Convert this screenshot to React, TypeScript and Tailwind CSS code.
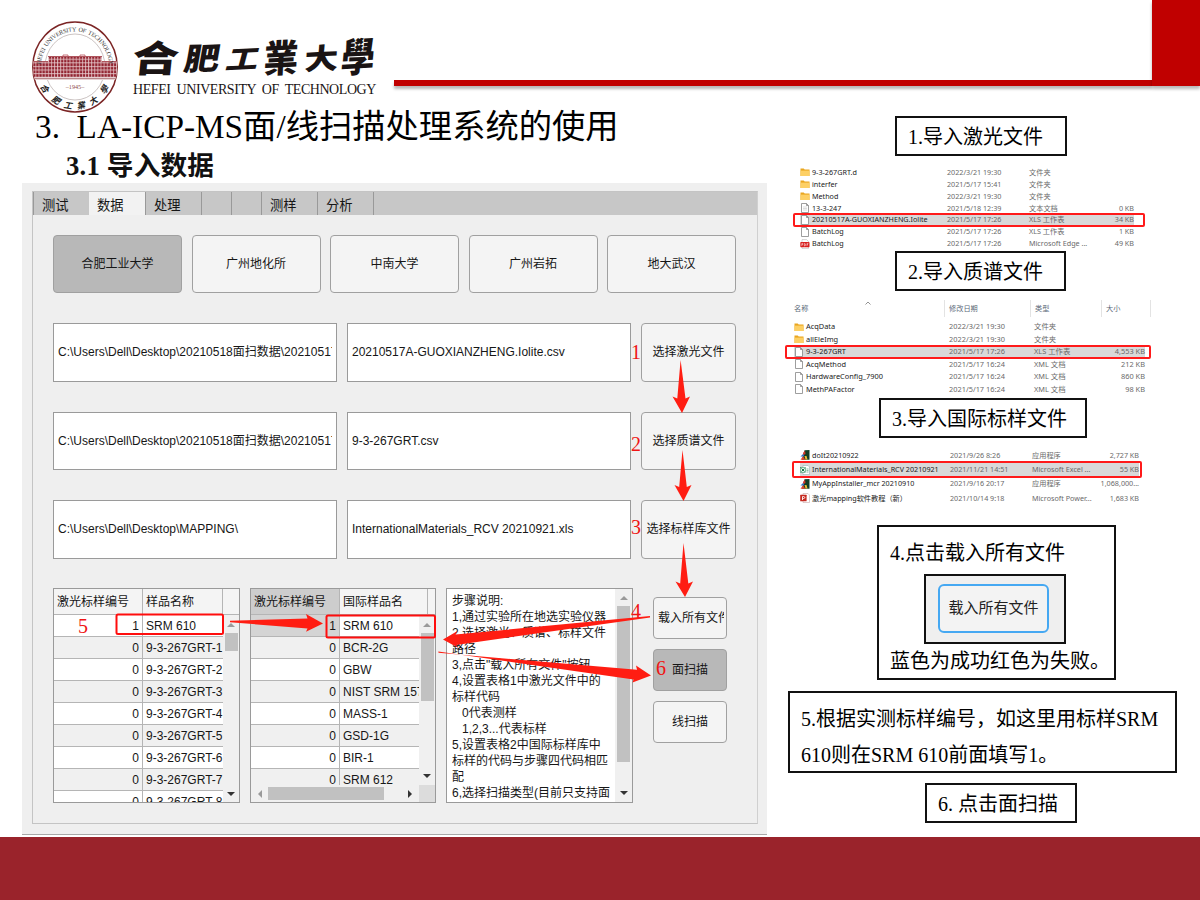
import React from 'react';

const latin = "font-['Liberation_Serif','Noto_Sans_CJK_SC',serif]";
const ui = "font-['Liberation_Sans','Noto_Sans_CJK_SC',sans-serif]";

function Seal() {
  return (
    <svg viewBox="0 0 90 94" className="w-[90px] h-[94px]">
      <defs>
        <path id="sealTop" d="M 10.6 48 A 34.4 36.5 0 0 1 79.4 48" />
        <clipPath id="sealClip"><ellipse cx="45" cy="47" rx="42" ry="45" /></clipPath>
        <pattern id="win" width="3.1" height="3.6" patternUnits="userSpaceOnUse">
          <rect width="3.1" height="3.6" fill="#b4616a" />
          <rect x="0.4" y="0.4" width="2" height="2.3" fill="#912330" />
          <rect x="2.5" y="0" width="0.5" height="3.6" fill="#ecd8d9" />
          <rect x="0" y="2.9" width="3.1" height="0.5" fill="#f0dfe0" />
        </pattern>
      </defs>
      <ellipse cx="45" cy="47" rx="42.2" ry="45" fill="#fff" stroke="#7b2424" strokeWidth="1.5" />
      <ellipse cx="45" cy="47" rx="30" ry="33" fill="none" stroke="#a79a98" strokeWidth="0.6" />
      <g clipPath="url(#sealClip)">
        <rect x="2" y="41" width="86" height="19" fill="#f6eaea" />
        <rect x="2" y="42" width="18" height="15" fill="url(#win)" />
        <rect x="70" y="42" width="18" height="15" fill="url(#win)" />
        <rect x="18.5" y="37" width="53" height="20" fill="url(#win)" />
        <path d="M18 36.5H72M2 41.5H18M72 41.5H88" stroke="#a7434c" strokeWidth="0.9" />
        <path d="M2 58.5H88" stroke="#b9878a" strokeWidth="1.6" />
        <path d="M33 36v-1h5v1M50 36v-1h5v1" stroke="#b9505a" strokeWidth="0.8" fill="none" />
      </g>
      <text fontSize="6.2" wordSpacing="1" fill="#333" className="font-['Liberation_Serif',serif]">
        <textPath href="#sealTop" startOffset="3.5" textLength="105">HEFEI UNIVERSITY OF TECHNOLOGY</textPath>
      </text>
      <text x="45" y="69" textAnchor="middle" fontSize="6.2" fill="#8c4a4a" className="font-['Liberation_Serif',serif]">–1945–</text>
      <g fontSize="8.5" fontWeight="700" fill="#222" textAnchor="middle" className="font-['Noto_Sans_CJK_TC',sans-serif]">
        <text transform="translate(14.5 69) rotate(56) skewX(-12)" y="2.5">合</text>
        <text transform="translate(26 81) rotate(32) skewX(-12)" y="2.5">肥</text>
        <text transform="translate(38.5 86) rotate(10) skewX(-12)" y="2.5">工</text>
        <text transform="translate(51.5 86) rotate(-10) skewX(-12)" y="2.5">業</text>
        <text transform="translate(64 81) rotate(-32) skewX(-12)" y="2.5">大</text>
        <text transform="translate(75 69.5) rotate(-56) skewX(-12)" y="2.5">學</text>
      </g>
    </svg>
  );
}

function Wordmark() {
  return (
    <svg viewBox="0 0 250 44" className="w-[250px] h-[44px] overflow-visible">
      <g fontWeight="900" fill="#1a1414" className="font-['Noto_Sans_CJK_TC',sans-serif]">
        <text transform="translate(-1 35.500) skewX(-6) scale(1.26 1)" fontSize="37">合</text>
        <text transform="translate(50.500 34.500) rotate(-2) skewX(-12) scale(1.08 0.92)" fontSize="33">肥</text>
        <text transform="translate(92.500 33.500) rotate(-3) skewX(-18) scale(1.08 0.87)" fontSize="30">工</text>
        <text transform="translate(131 37) rotate(-3) skewX(-6) scale(1.05 1.14)" fontSize="33">業</text>
        <text transform="translate(172 34) rotate(-3) skewX(-6) scale(1.02 0.87)" fontSize="33">大</text>
        <text transform="translate(208 36.500) rotate(-3) skewX(-8) scale(1.02 1.2)" fontSize="33">學</text>
      </g>
    </svg>
  );
}

const tabs: [string, string][] = [
  ['测试', 'w-[56px] bg-[#c7c7c7] border-l border-[#999]'],
  ['数据', 'w-[56px] bg-[#f2f2f2]'],
  ['处理', 'w-[56px] bg-[#c7c7c7] border-l border-[#999]'],
  ['', 'w-[30px] bg-[#c7c7c7] border-l border-[#999]'],
  ['', 'w-[30px] bg-[#c7c7c7] border-l border-[#999]'],
  ['测样', 'w-[56px] bg-[#c7c7c7] border-l border-[#999]'],
  ['分析', 'w-[56px] bg-[#c7c7c7] border-l border-[#999]'],
];

function Btn({ children, className = '' }: { children: React.ReactNode; className?: string }) {
  return (
    <div className={`flex items-center justify-center overflow-hidden whitespace-nowrap rounded-[4px] border border-[#a0a0a0] text-[12px] text-[#161616] ${className}`}>
      {children}
    </div>
  );
}

function FileRow({ path, file, button }: { path: string; file: string; button: string }) {
  return (
    <div className="flex h-[58.500px]">
      <div className="mr-[10px] flex w-[284px] items-center border border-[#9a9a9a] bg-white pl-[4px] pr-[4px]">
        <span className="w-full overflow-hidden whitespace-nowrap">{path}</span>
      </div>
      <div className="mr-[10px] flex w-[284px] items-center whitespace-nowrap border border-[#9a9a9a] bg-white pl-[4px]">{file}</div>
      <Btn className="w-[95px] bg-[#f4f4f4]">{button}</Btn>
    </div>
  );
}

function Tri({ dir, dim }: { dir: 'up' | 'down' | 'left' | 'right'; dim?: boolean }) {
  const d = { up: 'M0 5L4 1L8 5Z', down: 'M0 2L4 6L8 2Z', left: 'M6 0L2 4L6 8Z', right: 'M2 0L6 4L2 8Z' }[dir];
  return <svg viewBox="0 0 8 8" className="h-[8px] w-[8px]"><path d={d} fill={dim ? '#9a9a9a' : '#333'} /></svg>;
}

const samples = ['SRM 610', '9-3-267GRT-1', '9-3-267GRT-2', '9-3-267GRT-3', '9-3-267GRT-4', '9-3-267GRT-5', '9-3-267GRT-6', '9-3-267GRT-7', '9-3-267GRT-8'];
const standards = ['SRM 610', 'BCR-2G', 'GBW', 'NIST SRM 157', 'MASS-1', 'GSD-1G', 'BIR-1', 'SRM 612'];

function Rows({ names, selected }: { names: string[]; selected?: boolean }) {
  return (
    <>
      {names.map((n, i) => (
        <div key={n} className={`flex h-[22px] shrink-0 border-b border-[#b5b5b5] ${i % 2 ? 'bg-[#f0f0f0]' : 'bg-white'}`}>
          <div className={`flex w-[89px] items-center justify-end border-r border-[#b5b5b5] pr-[3px] ${selected && i === 0 ? 'bg-[#d4d4d4]' : ''}`}>{i === 0 ? 1 : 0}</div>
          <div className="flex flex-1 items-center overflow-hidden whitespace-nowrap pl-[3px]">{n}</div>
        </div>
      ))}
    </>
  );
}

const steps = ['步骤说明:', '1,通过实验所在地选实验仪器', '2,选择激光、质谱、标样文件', '路径', '3,点击"载入所有文件"按钮', '4,设置表格1中激光文件中的', '标样代码', '   0代表测样', '   1,2,3...代表标样', '5,设置表格2中国际标样库中', '标样的代码与步骤四代码相匹', '配', '6,选择扫描类型(目前只支持面'];

function Panel() {
  return (
    <section className={`relative ml-[22px] flex h-[652px] w-[745px] flex-col border-b border-[#a8a8a8] bg-[#efefef] pl-[10px] pr-[9px] pt-[8px] text-[12px] text-[#161616] ${ui}`}>
      <div className="flex h-[633px] flex-col border border-[#c4c4c4] border-r-[#d0d0d0]">
        <div className="flex h-[23px] shrink-0 bg-[#c7c7c7] text-[13.3px]">
          {tabs.map(([t, c], i) => (
            <div key={i} className={`flex items-center pl-[8px] pt-[4px] ${c}`}>{t}</div>
          ))}
          <div className="border-l border-[#999]" />
        </div>
        <div className="flex flex-col pl-[20px] pt-[20px]">
          <div className="flex h-[58px] gap-[9.500px]">
            <Btn className="w-[129px] border-[#8f8f8f] bg-[#b8b8b8]">合肥工业大学</Btn>
            <Btn className="w-[129px] bg-[#f4f4f4]">广州地化所</Btn>
            <Btn className="w-[129px] bg-[#f4f4f4]">中南大学</Btn>
            <Btn className="w-[129px] bg-[#f4f4f4]">广州岩拓</Btn>
            <Btn className="w-[129px] bg-[#f4f4f4]">地大武汉</Btn>
          </div>
          <div className="mt-[30px] flex flex-col gap-[30px]">
            <FileRow path="C:\Users\Dell\Desktop\20210518面扫数据\20210517" file="20210517A-GUOXIANZHENG.Iolite.csv" button="选择激光文件" />
            <FileRow path="C:\Users\Dell\Desktop\20210518面扫数据\20210517" file="9-3-267GRT.csv" button="选择质谱文件" />
            <FileRow path="C:\Users\Dell\Desktop\MAPPING\" file="InternationalMaterials_RCV 20210921.xls" button="选择标样库文件" />
          </div>
          <div className="mt-[29.500px] flex h-[215px] items-start">
            <div className="flex h-[215px] w-[187px] flex-col overflow-hidden border border-[#9a9a9a] bg-[#f0f0f0]">
              <div className="flex h-[26px] shrink-0 border-b border-[#b5b5b5] bg-[#f4f4f4]">
                <div className="flex w-[89px] items-center border-r border-[#b5b5b5] pl-[3px]">激光标样编号</div>
                <div className="flex w-[80px] items-center border-r border-[#b5b5b5] pl-[3px]">样品名称</div>
              </div>
              <div className="flex min-h-0 flex-1">
                <div className="flex w-[169px] flex-col overflow-hidden"><Rows names={samples} /></div>
                <div className="flex flex-1 flex-col items-center pb-[4px] pt-[7px]">
                  <Tri dir="up" dim />
                  <div className="mt-[3px] h-[18px] w-[13px] bg-[#c1c1c1]" />
                  <div className="flex-1" />
                  <Tri dir="down" />
                </div>
              </div>
            </div>
            <div className="ml-[10px] flex h-[215px] w-[186px] flex-col overflow-hidden border border-[#9a9a9a] bg-[#f0f0f0]">
              <div className="flex h-[26px] shrink-0 border-b border-[#b5b5b5] bg-[#f4f4f4]">
                <div className="flex w-[89px] items-center border-r border-[#b5b5b5] bg-[#cdcdcd] pl-[3px]">激光标样编号</div>
                <div className="flex w-[88px] items-center border-r border-[#b5b5b5] pl-[3px]">国际样品名</div>
              </div>
              <div className="flex h-[170px]">
                <div className="flex w-[168px] flex-col overflow-hidden"><Rows names={standards} selected /></div>
                <div className="flex flex-1 flex-col items-center pb-[5px] pt-[7px]">
                  <Tri dir="up" dim />
                  <div className="mt-[3px] h-[68px] w-[13px] bg-[#c1c1c1]" />
                  <div className="flex-1" />
                  <Tri dir="down" />
                </div>
              </div>
              <div className="flex flex-1 items-center">
                <div className="w-[17px] pl-[5px]"><Tri dir="left" dim /></div>
                <div className="h-[13px] w-[116px] bg-[#c1c1c1]" />
                <div className="flex flex-1 justify-end pr-[5px]"><Tri dir="right" /></div>
                <div className="h-full w-[16px] bg-[#dcdcdc]" />
              </div>
            </div>
            <div className="ml-[10px] flex h-[215px] w-[187px] overflow-hidden border border-[#9a9a9a] bg-white">
              <div className="w-[168px] whitespace-pre pl-[5px] pt-[3.500px] leading-[16px]">
                {steps.map((s) => <div key={s}>{s}</div>)}
              </div>
              <div className="flex flex-1 flex-col items-center bg-[#f0f0f0] pb-[5px] pt-[6px]">
                <Tri dir="up" dim />
                <div className="mt-[3px] h-[156px] w-[13px] bg-[#c1c1c1]" />
                <div className="flex-1" />
                <Tri dir="down" />
              </div>
            </div>
            <div className="ml-[20px] mt-[9px] flex flex-col gap-[10px]">
              <div className="flex h-[42px] w-[74px] items-center overflow-hidden rounded-[4px] border border-[#a0a0a0] bg-[#f4f4f4] pl-[4px] pr-[2px]">
                <span className="w-[67px] overflow-hidden whitespace-nowrap">载入所有文件</span>
              </div>
              <Btn className="h-[42px] w-[74px] border-[#8f8f8f] bg-[#b8b8b8]">面扫描</Btn>
              <Btn className="h-[42px] w-[74px] bg-[#f4f4f4]">线扫描</Btn>
            </div>
          </div>
        </div>
      </div>
      <svg viewBox="22 183 745 652" className="pointer-events-none absolute left-0 top-0 h-[652px] w-[745px]">
        <g fill="#ff1d12">
          <path d="M680.6 360L685.5 398.5L690 396.5L682 413L672.5 396.5L677.3 398.5Z" />
          <path d="M682.5 450L686.8 487L691.5 485L683.5 501L674.5 485L679.2 487Z" />
          <path d="M683.5 543L688.3 583.5L693 581.5L685 597L675.5 581.5L680.2 583.5Z" />
          <path d="M230 620.8L307.5 618.5L306 614L323 623.5L306 631.8L307.5 628.6L230 622.2Z" />
          <path d="M650 617.4L456 645L458.5 648L443 639.5L457.5 631L455.5 634.6L650 616Z" />
          <path d="M438.3 651.5L633.5 679.5L632.5 682.5L651 675.5L636 665.5L637 669.8L438.5 652.8Z" transform="translate(0 0)" />
        </g>
        <rect x="116.5" y="614.5" width="106.5" height="19.5" rx="1.5" fill="none" stroke="#ff0d0d" strokeWidth="2" />
        <rect x="326.5" y="615.5" width="108.5" height="22" rx="1.5" fill="none" stroke="#ff0d0d" strokeWidth="2" />
        <g fill="#f01414" fontSize="20" className="font-['Liberation_Serif',serif]">
          <text x="631" y="358.5">1</text>
          <text x="631" y="450.5">2</text>
          <text x="631" y="534">3</text>
          <text x="631" y="618">4</text>
          <text x="78" y="633">5</text>
          <text x="656" y="675">6</text>
        </g>
      </svg>
    </section>
  );
}

type Icon = 'folder' | 'doc' | 'txt' | 'pdf' | 'xls' | 'app' | 'ppt';

function FileIcon({ kind }: { kind: Icon }) {
  return (
    <svg viewBox="0 0 10 10" className="h-[10px] w-[10px] shrink-0">
      {kind === 'folder' && <><path d="M.5 1.5h3.2l1 1h4.8v6.5H.5z" fill="#e9a61f" /><path d="M.5 3.6h9v5.4H.5z" fill="#fdd065" /></>}
      {(kind === 'doc' || kind === 'txt') && <path d="M1.5.5h5l2 2v7H1.500zM6.500.5v2h2" fill="#fff" stroke="#858585" strokeWidth=".8" />}
      {kind === 'txt' && <path d="M3 4h4M3 5.5h4M3 7h4" stroke="#bbb" strokeWidth=".5" />}
      {kind === 'pdf' && <><path d="M2 .6h4.5L8.5 2.5v6.9H2z" fill="#fff" stroke="#aaa" strokeWidth=".5" /><rect x=".3" y="3" width="9.2" height="5.2" rx=".8" fill="#d8201f" /><path d="M1.8 7V4.4h1v1.2h-1M4.4 7V4.4c1.6 0 1.6 2.6 0 2.6M7 7V4.4h1.4M7 5.6h1" stroke="#fff" strokeWidth=".5" fill="none" /></>}
      {kind === 'xls' && <><path d="M3 .5h5l1.5 1.5v7.5H3z" fill="#fff" stroke="#8aa" strokeWidth=".5" /><path d="M6.5 4h2M6.5 5.5h2M6.5 7h2" stroke="#2f9763" strokeWidth=".6" /><rect x=".3" y="2.3" width="5.4" height="5.4" fill="#e2f2e9" stroke="#1e8452" strokeWidth=".5" /><path d="M1.5 3.5l3 3M4.5 3.5l-3 3" stroke="#127a44" strokeWidth="1" /></>}
      {kind === 'app' && <><path d="M4.5 .3L9.500 0v9.800H2z" fill="#123f25" /><path d="M.5 6.500L4 3v3.500z" fill="#3474c9" /><path d="M3 3L5 .8l.5 3.200-2 1z" fill="#d6382a" /><path d="M.5 9.800l2.500-3.500 2.300 3.500z" fill="#e0452b" /><path d="M4.500 6h2l1 3.500h-2z" fill="#eab92d" /></>}
      {kind === 'ppt' && <><path d="M3 .5h5l1.5 1.5v7.500H3z" fill="#fff" stroke="#b99" strokeWidth=".5" /><rect x=".2" y="1.800" width="6.400" height="6.400" rx=".5" fill="#c62a20" /><path d="M2.500 7V3.500h1c1.700 0 1.700 2 0 2h-1" stroke="#fff" strokeWidth=".9" fill="none" /></>}
    </svg>
  );
}

type Entry = [Icon, string, string, string, string];

const listA: Entry[] = [
  ['folder', '9-3-267GRT.d', '2022/3/21 19:30', '文件夹', ''],
  ['folder', 'interfer', '2021/5/17 15:41', '文件夹', ''],
  ['folder', 'Method', '2022/3/21 19:30', '文件夹', ''],
  ['txt', '13-3-247', '2021/5/18 12:39', '文本文档', '0 KB'],
  ['doc', '20210517A-GUOXIANZHENG.Iolite', '2021/5/17 17:26', 'XLS 工作表', '34 KB'],
  ['doc', 'BatchLog', '2021/5/17 17:26', 'XLS 工作表', '1 KB'],
  ['pdf', 'BatchLog', '2021/5/17 17:26', 'Microsoft Edge ...', '49 KB'],
];
const listB: Entry[] = [
  ['folder', 'AcqData', '2022/3/21 19:30', '文件夹', ''],
  ['folder', 'allEleImg', '2022/3/21 19:30', '文件夹', ''],
  ['doc', '9-3-267GRT', '2021/5/17 17:26', 'XLS 工作表', '4,553 KB'],
  ['doc', 'AcqMethod', '2021/5/17 16:24', 'XML 文档', '212 KB'],
  ['doc', 'HardwareConfig_7900', '2021/5/17 16:24', 'XML 文档', '860 KB'],
  ['doc', 'MethPAFactor', '2021/5/17 16:24', 'XML 文档', '98 KB'],
];
const listC: Entry[] = [
  ['app', 'doIt20210922', '2021/9/26 8:26', '应用程序', '2,727 KB'],
  ['xls', 'InternationalMaterials_RCV 20210921', '2021/11/21 14:51', 'Microsoft Excel ...', '55 KB'],
  ['app', 'MyAppInstaller_mcr 20210910', '2021/9/16 20:17', '应用程序', '1,068,000...'],
  ['ppt', '激光mapping软件教程（新）', '2021/10/14 9:18', 'Microsoft Power...', '1,683 KB'],
];

function FileList({ items, active, cols, row, mark, className = '' }: { items: Entry[]; active: number; cols: string; row: string; mark: string; className?: string }) {
  return (
    <div className={`whitespace-nowrap font-['Noto_Sans','Noto_Sans_CJK_SC',sans-serif] leading-none text-[#6a6a6a] ${className}`}>
      {items.map(([k, n, d, t, s], i) => (
        <div key={i} className={`relative grid items-center ${row} ${cols} ${i === active ? 'bg-[#d9d9d9]' : ''}`}>
          <div className="flex items-center gap-[2px] text-[#1a1a1a]"><FileIcon kind={k} />{n}</div>
          <div>{d}</div>
          <div>{t}</div>
          <div className="flex justify-end">{s}</div>
          {i === active && <div className={`absolute rounded-[2px] border-2 border-[#ff1a1a] ${mark}`} />}
        </div>
      ))}
    </div>
  );
}

function Note({ children, className = '' }: { children: React.ReactNode; className?: string }) {
  return <div className={`shrink-0 border-2 border-[#111] bg-white text-[20px] text-black ${latin} ${className}`}>{children}</div>;
}

export default function App() {
  return (
    <div className="flex h-[900px] w-[1200px] flex-col overflow-hidden bg-white">
      <header className="flex h-[106px] shrink-0">
        <div className="ml-[30px] mt-[20px] w-[90px]"><Seal /></div>
        <div className="ml-[12px] mt-[36px] w-[262px]">
          <Wordmark />
          <div className="ml-[1px] mt-[1px] whitespace-pre font-['Liberation_Serif',serif] text-[14px] leading-[18px] tracking-[-0.44px] text-[#1a1414]">HEFEI  UNIVERSITY  OF  TECHNOLOGY</div>
        </div>
        <div className="mt-[80px] h-[6px] w-[758px] bg-[#c00000] shadow-[0_3px_3px_rgba(0,0,0,0.28)]" />
        <div className="h-[86px] w-[48px] bg-[#c00000] shadow-[0_3px_3px_rgba(0,0,0,0.28)]" />
      </header>
      <main className="flex h-[731px] shrink-0">
        <div className="flex w-[780px] flex-col">
          <h1 className={`h-[42px] whitespace-pre pl-[35px] text-[33.3px] leading-[42px] text-black ${latin}`}>3.  LA-ICP-MS面/线扫描处理系统的使用</h1>
          <h2 className={`mb-[1px] h-[34px] pl-[66px] text-[26.67px] font-bold leading-[36px] tracking-[0.2px] text-[#111] ${latin}`}>3.1 导入数据</h2>
          <Panel />
        </div>
        <div className="flex w-[420px] flex-col pt-[10px]">
          <Note className="ml-[115px] h-[40px] w-[172px] pl-[11px] leading-[38px]">1.导入激光文件</Note>
          <FileList items={listA} active={4} cols="grid-cols-[147px_82px_73px_32px]" row="h-[11.9px]" mark="-top-[1px] -bottom-[1px] -left-[7px] -right-[11px]" className="ml-[20px] mt-[10.5px] h-[84.5px] w-[334px] text-[7.2px]" />
          <Note className="ml-[115px] h-[40px] w-[171px] pl-[11px] leading-[38px]">2.导入质谱文件</Note>
          <div className="ml-[14px] mt-[9px] grid h-[17px] w-[357px] grid-cols-[151px_86px_71px_49px] items-center font-['Noto_Sans_CJK_SC',sans-serif] text-[7.2px] text-[#5d6a7a]">
            <div className="flex h-full items-center border-r border-[#e3e3e3]"><span className="w-[71px]">名称</span><svg viewBox="0 0 6 4" className="mb-[12px] h-[4px] w-[6px]"><path d="M.5 3.5L3 1l2.5 2.5" fill="none" stroke="#777" strokeWidth=".8" /></svg></div>
            <div className="flex h-full items-center border-r border-[#e3e3e3] pl-[4px]">修改日期</div>
            <div className="flex h-full items-center border-r border-[#e3e3e3] pl-[4px]">类型</div>
            <div className="flex h-full items-center border-r border-[#e3e3e3] pl-[4px]">大小</div>
          </div>
          <FileList items={listB} active={2} cols="grid-cols-[155px_85px_71px_40px]" row="h-[12.5px]" mark="-top-[1px] -bottom-[1px] -left-[9px] -right-[6px]" className="ml-[14px] mt-[3.500px] h-[75px] w-[351px] text-[7.400px]" />
          <Note className="ml-[99px] mt-[2px] h-[40px] w-[208px] pl-[11px] leading-[38px]">3.导入国际标样文件</Note>
          <FileList items={listC} active={1} cols="grid-cols-[150px_82px_72px_35px]" row="h-[14.4px]" mark="-top-[1px] -bottom-[1px] -left-[8px] -right-[3px]" className="ml-[20px] mt-[10.500px] h-[58px] w-[339px] text-[7.2px]" />
          <Note className="ml-[97px] mt-[18.500px] flex h-[155px] w-[239px] flex-col pl-[11px]">
            <div className="h-[47px] leading-[52px]">4.点击载入所有文件</div>
            <div className="ml-[34px] h-[70px] w-[142px] border-2 border-[#111] bg-[#efefef] pl-[12px] pt-[8px]">
              <div className={`flex h-[49px] w-[111px] items-center justify-center rounded-[6px] border-2 border-[#45a8f2] bg-[#f3f3f3] text-[15px] text-[#222] ${ui}`}>载入所有文件</div>
            </div>
            <div className="leading-[34px]">蓝色为成功红色为失败。</div>
          </Note>
          <Note className="ml-[8px] mt-[11px] h-[82px] w-[389px] whitespace-pre pl-[11px] pt-[8px] leading-[36px]">5.根据实测标样编号，如这里用标样SRM{'\n'}610则在SRM 610前面填写1。</Note>
          <Note className="ml-[145px] mt-[10px] h-[40px] w-[152px] pl-[11px] leading-[38px]">6. 点击面扫描</Note>
        </div>
      </main>
      <footer className="h-[63px] bg-[#9a232b]" />
    </div>
  );
}
